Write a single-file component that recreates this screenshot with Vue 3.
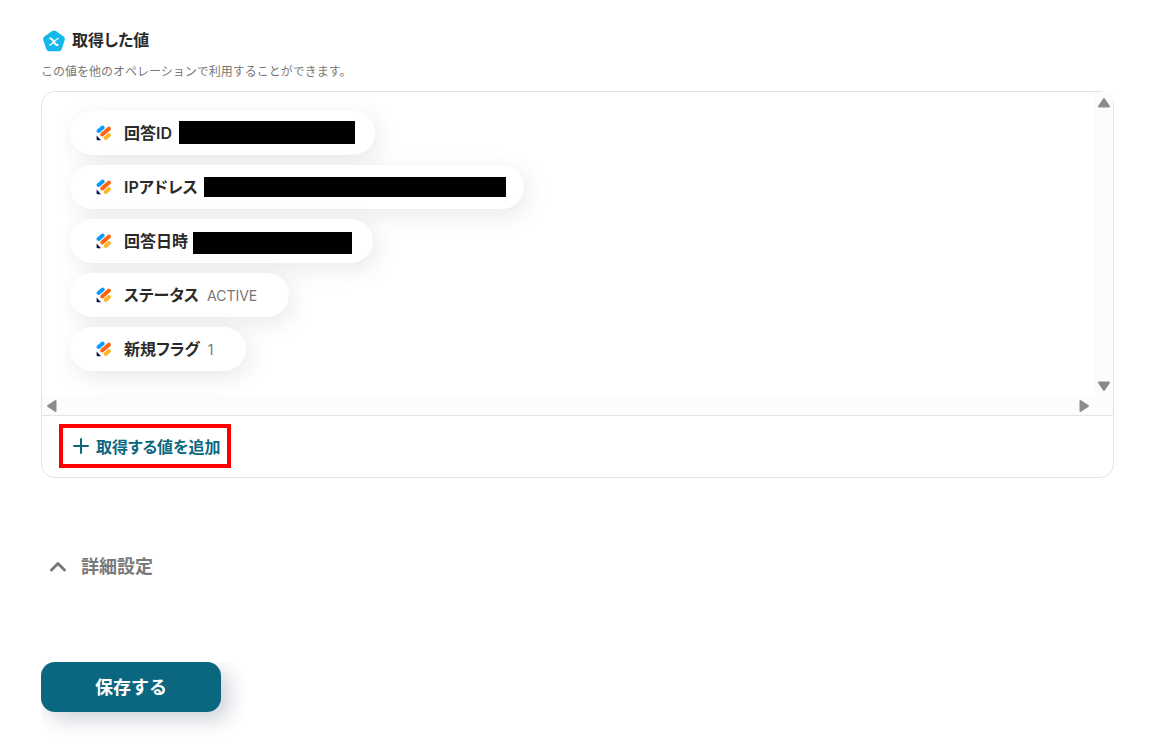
<script setup>
const values = [
  { label: '回答ID', mask: 'mask-id' },
  { label: 'IPアドレス', mask: 'mask-ip' },
  { label: '回答日時', mask: 'mask-date' },
  { label: 'ステータス', value: 'ACTIVE' },
  { label: '新規フラグ', value: '1' },
]
</script>

<template>
  <main class="page">
    <header class="heading">
      <svg class="badge" viewBox="0 -1 24 24" aria-hidden="true">
        <path d="M10.1 2.1Q12 .8 13.9 2.1L21.6 7.5Q23.4 8.9 22.8 10.8L19.7 20.2Q19 22.2 17 22.2H7Q5 22.2 4.3 20.2L1.2 10.8Q.6 8.9 2.4 7.5Z" fill="#12b8ea" />
        <path d="M7.4 9.4H8.8C10.8 9.4 12.6 16 14.8 16H16.4" fill="none" stroke="#fff" stroke-width="2" />
        <path d="M16.6 9.4C13.7 9.4 10.7 16 7.4 16" fill="none" stroke="#fff" stroke-width="1.3" />
      </svg>
      <h2>取得した値</h2>
    </header>
    <p class="description">この値を他のオペレーションで利用することができます。</p>

    <section class="card">
      <div class="viewport">
        <ul class="values">
          <li v-for="item in values" :key="item.label" class="pill">
            <svg class="mark" viewBox="0 0 16 16" aria-hidden="true">
              <g fill="none" stroke-width="4" stroke-linecap="round">
                <path d="M2.6 6L6.6 2.6" stroke="#0a9bff" />
                <path d="M6.2 9.5L13 3.5" stroke="#ff650f" />
                <path d="M9.6 13L13 10" stroke="#ffb52e" />
              </g>
              <path d="M.6 10.4L5 15.2H1.4Q.6 15.2 .6 14.4Z" fill="#0b0b4f" />
            </svg>
            <span class="label">{{ item.label }}</span>
            <span v-if="item.value" class="value">{{ item.value }}</span>
            <span v-else class="mask" :class="item.mask"></span>
          </li>
        </ul>
        <div class="track vertical">
          <svg class="arrow" viewBox="0 0 14 12" aria-hidden="true"><path d="M7 2L12 9.5H2Z" /></svg>
          <svg class="arrow" viewBox="0 0 14 12" aria-hidden="true"><path d="M7 10L12 2.5H2Z" /></svg>
        </div>
        <div class="track horizontal">
          <svg class="arrow side" viewBox="0 0 12 14" aria-hidden="true"><path d="M2 7L9.5 2V12Z" /></svg>
          <svg class="arrow side" viewBox="0 0 12 14" aria-hidden="true"><path d="M10 7L2.5 2V12Z" /></svg>
        </div>
        <div class="track"></div>
      </div>
      <footer class="card-footer">
        <button type="button" class="add">
          <svg viewBox="0 0 16 16" aria-hidden="true"><path d="M8 1V15M1 8H15" fill="none" stroke="currentColor" stroke-width="2" stroke-linecap="round" /></svg>
          取得する値を追加
        </button>
      </footer>
    </section>

    <button type="button" class="details">
      <svg viewBox="0 0 18 14" aria-hidden="true"><path d="M2.5 10L9 3.5L15.5 10" fill="none" stroke="currentColor" stroke-width="3" stroke-linecap="round" stroke-linejoin="round" /></svg>
      詳細設定
    </button>

    <button type="button" class="save">保存する</button>
  </main>
</template>

<style>
body {
  margin: 0;
  background: #fff;
}
</style>

<style scoped>
.page {
  padding: 28px 40px 34px 41px;
  font-family: Inter, "Noto Sans CJK JP", sans-serif;
  color: #2a2a2a;
}
button {
  font: inherit;
  border: 0;
  background: none;
  cursor: pointer;
}
.heading {
  display: flex;
  align-items: center;
  gap: 6px;
  height: 24px;
  padding-left: 1px;
}
.badge {
  width: 24px;
  height: 24px;
}
h2 {
  margin: 0;
  font-size: 16px;
  line-height: 24px;
  font-weight: 600;
  font-feature-settings: "palt";
}
.description {
  margin: 10px 0 9px;
  font-size: 12px;
  line-height: 20px;
  color: #777;
}
.card {
  border: 1px solid #e4e4e4;
  border-radius: 14px;
  background: #fff;
}
.viewport {
  display: grid;
  grid-template-columns: 1fr 19px;
  grid-template-rows: auto 19px;
}
.values {
  display: flex;
  flex-direction: column;
  align-items: flex-start;
  gap: 10px;
  margin: 0;
  padding: 19px 28px 25px;
  list-style: none;
  overflow: hidden;
}
.pill {
  display: flex;
  align-items: center;
  box-sizing: border-box;
  height: 44px;
  padding: 0 32px 0 26px;
  border-radius: 22px;
  background: #fff;
  box-shadow: 4px 6px 24px rgba(0, 0, 0, 0.09);
}
.mark {
  width: 16px;
  height: 16px;
  margin-right: 12px;
}
.label {
  font-size: 16px;
  line-height: 24px;
  font-weight: 600;
  font-feature-settings: "palt";
}
.value {
  margin-left: 8px;
  font-size: 14px;
  color: #777;
}
.mask {
  height: 22px;
  background: #000;
}
.mask-id {
  width: 176px;
  height: 23px;
  margin: 0 -12px 2px 7px;
}
.mask-ip {
  width: 302px;
  height: 20px;
  margin: 0 -14px 0 6px;
}
.mask-date {
  width: 159px;
  margin: 4px -11px 0 5px;
}
.track {
  display: flex;
  justify-content: space-between;
  background: #fcfcfc;
}
.vertical {
  flex-direction: column;
  align-items: center;
  padding: 5px 0 4px;
}
.horizontal {
  align-items: center;
  padding: 0 4px;
}
.arrow {
  width: 14px;
  height: 12px;
  fill: #8b8b8b;
  stroke: #8b8b8b;
  stroke-width: 2;
  stroke-linejoin: round;
}
.side {
  width: 12px;
  height: 14px;
}
.card-footer {
  padding: 8px 17px 9px;
  border-top: 1px solid #e4e4e4;
}
.add {
  display: flex;
  align-items: center;
  gap: 7px;
  height: 44px;
  padding: 0 7px 0 10px;
  border: 4px solid #f00;
  font-size: 16px;
  font-weight: 600;
  font-feature-settings: "palt";
  color: #0b6780;
}
.add svg {
  width: 16px;
  height: 16px;
}
.details {
  display: flex;
  align-items: center;
  gap: 14px;
  margin: 75px 0 0;
  padding: 0 8px;
  font-size: 18px;
  line-height: 28px;
  font-weight: 600;
  color: #7a7a7a;
}
.details svg {
  width: 18px;
  height: 14px;
}
.save {
  display: block;
  width: 180px;
  height: 50px;
  margin-top: 81px;
  padding: 0 0 2px;
  border-radius: 14px;
  background: #0b6780;
  box-shadow: 8px 8px 20px rgba(10, 30, 60, 0.2);
  clip-path: inset(0 -40px -40px 0);
  font-size: 18px;
  font-weight: 700;
  color: #fff;
}
</style>
